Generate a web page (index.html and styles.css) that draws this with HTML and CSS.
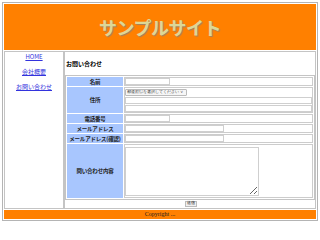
FILE: index.html
```html
<!DOCTYPE html>
<html lang="ja">
<head>
    <meta charset="UTF-8">
    <title>サンプルサイト</title>
    <link rel="stylesheet" href="styles.css">
</head>
<body>
    <div class="page">
        <header class="banner">
            <h1>サンプルサイト</h1>
        </header>

        <div class="middle">
            <nav class="side">
                <a href="#">HOME</a>
                <a href="#">会社概要</a>
                <a href="#">お問い合わせ</a>
            </nav>

            <main class="content">
                <h2>お問い合わせ</h2>
                <form>
                    <table class="contact">
                        <tr class="row-name">
                            <th>名前</th>
                            <td><input type="text" class="short"></td>
                        </tr>
                        <tr class="row-addr">
                            <th>住所</th>
                            <td>
                                <div class="addr">
                                    <select><option>都道府県を選択してください ∨</option></select>
                                    <input type="text" class="wide">
                                    <input type="text" class="wide">
                                </div>
                            </td>
                        </tr>
                        <tr class="row-tel">
                            <th>電話番号</th>
                            <td><input type="text" class="short"></td>
                        </tr>
                        <tr class="row-mail">
                            <th>メールアドレス</th>
                            <td><input type="text" class="mid"></td>
                        </tr>
                        <tr class="row-mail">
                            <th>メールアドレス(確認)</th>
                            <td><input type="text" class="mid"></td>
                        </tr>
                        <tr class="row-body">
                            <th>問い合わせ内容</th>
                            <td><textarea></textarea></td>
                        </tr>
                    </table>
                    <div class="submit">
                        <button type="submit">送信</button>
                    </div>
                </form>
            </main>
        </div>

        <footer class="foot">Copyright ...</footer>
    </div>
</body>
</html>
```

FILE: styles.css
```css
body {
    margin: 0;
    background: #fff;
    font-family: "Liberation Serif", "Noto Sans CJK JP", serif;
}
.page {
    width: 316px;
    margin: 2px;
    padding: 1px;
    box-sizing: border-box;
    border: 1px solid #b4b4b4;
    display: flex;
    flex-direction: column;
    gap: 1px;
}
.banner {
    height: 46px;
    background: #ff8000;
    display: flex;
    align-items: center;
    justify-content: center;
}
.banner h1 {
    margin: 0;
    font-family: "Noto Sans CJK JP", sans-serif;
    font-size: 18px;
    font-weight: bold;
    letter-spacing: -0.5px;
    color: #dcd796;
    text-shadow: 1px 1px 1px #a08060;
}
.middle {
    display: flex;
    height: 158px;
}
.side {
    width: 60px;
    border: 1px solid #c4c4c4;
    box-sizing: border-box;
    display: flex;
    flex-direction: column;
    align-items: center;
    gap: 6px;
    padding-top: 0;
    font-size: 6px;
    line-height: 9px;
}
.side a {
    color: #3333dd;
    font-family: "Noto Sans CJK JP", serif;
}
.content {
    flex: 1;
    border: 1px solid #c4c4c4;
    display: flex;
    flex-direction: column;
}
.content h2 {
    margin: 0;
    height: 23px;
    display: flex;
    align-items: center;
    padding-left: 1px;
    font-family: "Noto Sans CJK JP", sans-serif;
    font-size: 6px;
    font-weight: bold;
}
.contact {
    width: 250px;
    border: 1px solid #c4c4c4;
    border-spacing: 1px;
    font-family: "Noto Sans CJK JP", sans-serif;
}
.contact th {
    width: 56px;
    padding: 0;
    background: #a8c6fe;
    color: #222;
    font-size: 5.5px;
    font-weight: bold;
    text-align: center;
    white-space: nowrap;
    letter-spacing: -0.2px;
}
.contact td {
    padding: 0;
    border: 1px solid #cccccc;
    vertical-align: middle;
}
.row-name th, .row-tel th {
    height: 9px;
}
.row-mail th {
    height: 9px;
}
.row-addr th {
    height: 26px;
}
.row-body th {
    height: 54px;
}
input, select, textarea {
    display: block;
    box-sizing: border-box;
    margin: 0;
    padding: 0;
    border: 1px solid #cfcfcf;
    background: #fff;
    font-size: 4px;
}
.short {
    width: 45px;
    height: 7px;
}
.mid {
    width: 99px;
    height: 7px;
}
.addr {
    display: flex;
    flex-direction: column;
    gap: 1px;
}
.addr select {
    appearance: none;
    width: 62px;
    height: 7px;
    padding-left: 1px;
    border-color: #bbb;
    border-radius: 1px;
    background: #f6f6f6;
    font-size: 3.5px;
    color: #333;
}
.wide {
    width: 187px;
    height: 7px;
}
textarea {
    width: 134px;
    height: 49px;
    resize: both;
}
.submit {
    display: flex;
    justify-content: center;
    padding-top: 1px;
}
.submit button {
    width: 12px;
    height: 6px;
    padding: 0;
    font-size: 3.5px;
    line-height: 1;
    border: 1px solid #bbb;
    background: #f0f0f0;
    margin-left: 2px;
}
.foot {
    height: 9px;
    background: #ff8000;
    font-size: 6px;
    line-height: 9px;
    text-align: center;
    color: #222;
}
```
